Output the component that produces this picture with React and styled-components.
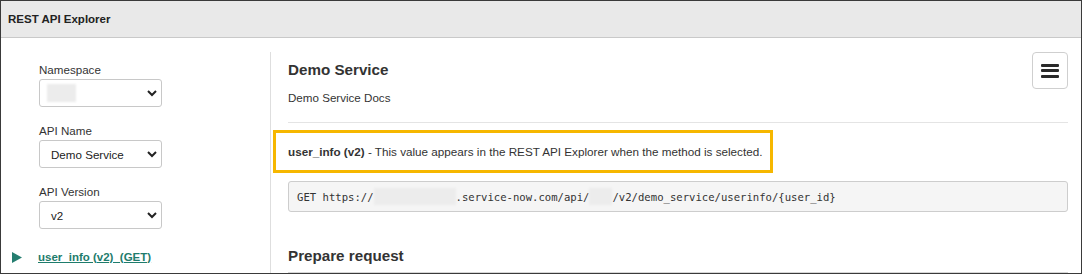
import React from "react";
import styled, { createGlobalStyle } from "styled-components";

const Global = createGlobalStyle`
  html, body { margin: 0; padding: 0; background: #fff; }
  body { font-family: "Liberation Sans", Arial, sans-serif; color: #333; }
  * { box-sizing: border-box; }
`;

const Frame = styled.div`
  width: 1082px;
  height: 274px;
  border: 1px solid #3a3a3a;
  overflow: hidden;
  display: flex;
  flex-direction: column;
  background: #fff;
`;

const Header = styled.div`
  height: 37px;
  flex: none;
  background: #e9e9e9;
  border-bottom: 1px solid #c9c9c9;
  display: flex;
  align-items: center;
  padding-left: 7px;
  font-size: 11.5px;
  font-weight: bold;
  color: #222;
`;

const Body = styled.div`
  flex: 1;
  display: flex;
  margin-top: 14px;
  min-height: 0;
`;

const Sidebar = styled.div`
  width: 270px;
  flex: none;
  border-right: 1px solid #dedede;
  padding: 10px 0 0 11px;
`;

const Field = styled.div`
  margin-left: 27px;
  margin-bottom: 16px;
`;

const Label = styled.div`
  font-size: 11.6px;
  line-height: 16px;
  color: #333;
  margin-bottom: 1px;
`;

const SelectBox = styled.div`
  width: 123px;
  height: 28px;
  border: 1px solid #c8c8c8;
  border-radius: 3px;
  background: #fff;
  display: flex;
  align-items: center;
  justify-content: space-between;
  padding: 0 4px 0 11px;
  font-size: 11.6px;
  color: #222;
`;

const Blur = styled.span`
  display: inline-block;
  width: ${(p) => p.$w}px;
  height: ${(p) => p.$h || 16}px;
  background: #ececec;
  filter: blur(0.8px);
  vertical-align: middle;
`;

const MethodRow = styled.div`
  display: flex;
  align-items: center;
  gap: 16px;
  margin-top: 22px;
`;

const MethodLink = styled.a`
  font-size: 11.5px;
  font-weight: bold;
  color: #1e7c6c;
  text-decoration: underline;
`;

const Main = styled.div`
  flex: 1;
  padding: 0 13px 0 17px;
  display: flex;
  flex-direction: column;
`;

const TitleRow = styled.div`
  display: flex;
  justify-content: space-between;
  align-items: flex-start;
  height: 37px;
`;

const Title = styled.h2`
  margin: 9px 0 0;
  font-size: 15.2px;
  line-height: 18px;
  font-weight: bold;
  color: #333;
`;

const MenuButton = styled.button`
  width: 36px;
  height: 37px;
  border: 1px solid #cfcfcf;
  border-radius: 4px;
  background: #fff;
  display: flex;
  flex-direction: column;
  align-items: center;
  justify-content: center;
  gap: 2.5px;
  padding: 0;
`;

const Bar = styled.span`
  display: block;
  width: 18px;
  height: 3px;
  border-radius: 1px;
  background: #2a2a2a;
`;

const Docs = styled.div`
  margin-top: 1px;
  font-size: 11.6px;
  line-height: 16px;
  color: #333;
`;

const Rule = styled.div`
  margin-top: 16px;
  border-top: 1px solid #e4e4e4;
`;

const Highlight = styled.div`
  align-self: flex-start;
  margin: 7px 0 0 -15px;
  border: 3px solid #f6b700;
  padding: 9px 8px 9px 12px;
  font-size: 11.7px;
  line-height: 19px;
  color: #333;
`;

const Code = styled.div`
  margin-top: 8px;
  height: 31px;
  background: #f5f5f5;
  border: 1px solid #cdcdcd;
  border-radius: 3px;
  display: flex;
  align-items: center;
  padding-left: 8px;
  font-family: "DejaVu Sans Mono", "Liberation Mono", monospace;
  font-size: 10.6px;
  color: #333;
  white-space: pre;
`;

const Section = styled.h2`
  margin: 35px 0 0;
  font-size: 15.2px;
  line-height: 18px;
  font-weight: bold;
  color: #333;
`;

const SectionRule = styled.div`
  margin-top: 7px;
  border-top: 1px solid #d6d6d6;
`;

const Chevron = () => (
  <svg width="10" height="7" viewBox="0 0 10 7">
    <polyline points="1,1 5,5 9,1" fill="none" stroke="#222" strokeWidth="2" />
  </svg>
);

const Triangle = () => (
  <svg width="10" height="11" viewBox="0 0 10 11">
    <polygon points="0,0 10,5.5 0,11" fill="#257e70" />
  </svg>
);

export default function App() {
  return (
    <>
      <Global />
      <Frame>
        <Header>REST API Explorer</Header>
        <Body>
          <Sidebar>
            <Field>
              <Label>Namespace</Label>
              <SelectBox style={{ paddingLeft: 7 }}>
                <Blur $w={29} $h={18} />
                <Chevron />
              </SelectBox>
            </Field>
            <Field>
              <Label>API Name</Label>
              <SelectBox>
                <span>Demo Service</span>
                <Chevron />
              </SelectBox>
            </Field>
            <Field>
              <Label>API Version</Label>
              <SelectBox>
                <span>v2</span>
                <Chevron />
              </SelectBox>
            </Field>
            <MethodRow>
              <Triangle />
              <MethodLink>user_info (v2)_(GET)</MethodLink>
            </MethodRow>
          </Sidebar>
          <Main>
            <TitleRow>
              <Title>Demo Service</Title>
              <MenuButton aria-label="menu">
                <Bar />
                <Bar />
                <Bar />
              </MenuButton>
            </TitleRow>
            <Docs>Demo Service Docs</Docs>
            <Rule />
            <Highlight>
              <b>user_info (v2)</b> - This value appears in the REST API Explorer when the method is selected.
            </Highlight>
            <Code>
              GET https://<Blur $w={82} $h={17} />.service-now.com/api/<Blur $w={23} $h={17} />/v2/demo_service/userinfo/{"{user_id}"}
            </Code>
            <Section>Prepare request</Section>
            <SectionRule />
          </Main>
        </Body>
      </Frame>
    </>
  );
}
